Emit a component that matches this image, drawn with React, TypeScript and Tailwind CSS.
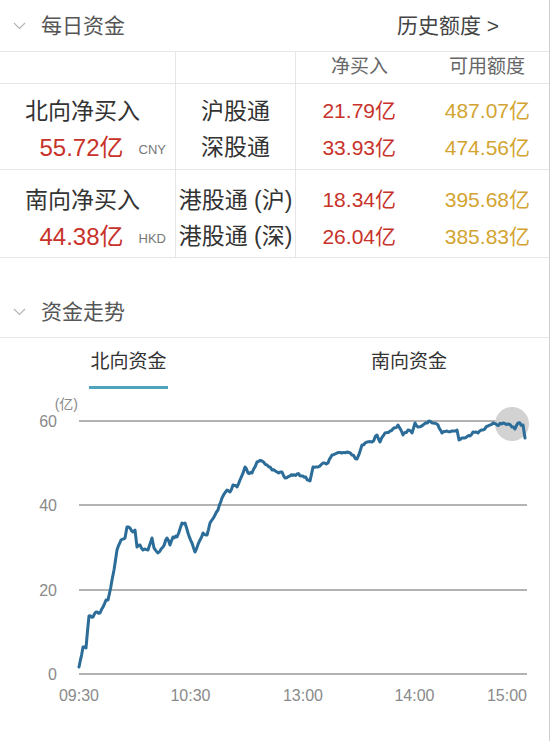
const pts: [number, number][] = [
  [79, 667], [83, 647], [86, 648], [89, 616], [93, 617], [96, 612], [100, 613], [103, 607], [106, 600], [108, 600],
  [112, 580], [114, 570], [117, 550], [121, 540], [125, 538], [127, 527], [130, 528], [133, 532], [135, 530], [137, 547],
  [140, 545], [143, 550], [148, 550], [152, 538], [154, 548], [158, 553], [163, 547], [167, 538], [170, 545], [173, 537],
  [177, 537], [182, 523], [185, 523], [188, 533], [192, 543], [195, 552], [200, 540], [203, 533], [207, 535], [210, 523],
  [215, 515], [218, 510], [222, 498], [227, 490], [230, 492], [233, 485], [237, 487], [240, 480], [245, 467], [248, 473],
  [252, 473], [257, 462], [262, 461], [267, 465], [272, 470], [277, 472], [282, 472], [285, 478], [290, 476], [297, 474],
  [303, 476], [310, 481], [313, 467], [318, 467], [323, 463], [328, 463], [332, 455], [337, 453], [342, 453], [347, 452],
  [352, 455], [357, 459], [362, 445], [367, 442], [372, 442], [377, 435], [380, 442], [385, 433], [390, 431], [397, 427],
  [398, 425], [403, 435], [408, 430], [412, 433], [415, 423], [418, 427], [423, 425], [429, 421], [433, 423], [438, 425],
  [442, 433], [447, 431], [452, 431], [457, 430], [459, 440], [463, 438], [470, 436], [473, 432], [478, 433], [483, 430],
  [488, 426], [493, 423], [497, 425], [503, 423], [508, 424], [512, 427], [515, 429], [518, 423], [523, 425], [525, 438],
];

// chart svg starts at page y = 390
const TOP = 390;

function buildPath() {
  let seed = 11;
  const rand = () => {
    seed = (seed * 9301 + 49297) % 233280;
    return seed / 233280;
  };
  let d = `M${pts[0][0]},${pts[0][1] - TOP}`;
  for (let i = 1; i < pts.length; i++) {
    const [x0, y0] = pts[i - 1];
    const [x1, y1] = pts[i];
    const steps = Math.max(1, Math.round((x1 - x0) / 1.5));
    for (let s = 1; s <= steps; s++) {
      const x = x0 + ((x1 - x0) * s) / steps;
      const noise = s < steps ? (rand() - 0.5) * 2.2 : 0;
      const y = y0 + ((y1 - y0) * s) / steps + noise;
      d += ` L${x.toFixed(1)},${(y - TOP).toFixed(1)}`;
    }
  }
  return d;
}

const linePath = buildPath();

function Chevron() {
  return (
    <svg width="13" height="8" viewBox="0 0 13 8" fill="none">
      <path d="M1 1l5.5 5.5L12 1" stroke="#b5b5b5" strokeWidth="1.2" />
    </svg>
  );
}

function SectionHeader({ title, right }: { title: string; right?: string }) {
  return (
    <div className="h-[52px] flex items-center border-b border-[#e6e6e6]">
      <div className="w-[41px] pl-[13px] flex items-center">
        <Chevron />
      </div>
      <span className="text-[21px] text-[#555]">{title}</span>
      {right && <span className="ml-auto mr-[50px] text-[21px] text-[#444]">{right}</span>}
    </div>
  );
}

type Group = {
  label: string;
  total: string;
  unit: string;
  rows: { name: string; net: string; quota: string }[];
  pt: string;
  h: string;
};

const groups: Group[] = [
  {
    label: "北向净买入",
    total: "55.72亿",
    unit: "CNY",
    pt: "pt-[9px]",
    h: "h-[86px]",
    rows: [
      { name: "沪股通", net: "21.79亿", quota: "487.07亿" },
      { name: "深股通", net: "33.93亿", quota: "474.56亿" },
    ],
  },
  {
    label: "南向净买入",
    total: "44.38亿",
    unit: "HKD",
    pt: "pt-[12px]",
    h: "h-[88px]",
    rows: [
      { name: "港股通 (沪)", net: "18.34亿", quota: "395.68亿" },
      { name: "港股通 (深)", net: "26.04亿", quota: "385.83亿" },
    ],
  },
];

function FlowTable() {
  return (
    <div>
      <div className="grid grid-cols-[176px_120px_104px_1fr] h-[32px] border-b border-[#e6e6e6]">
        <div className="border-r border-[#e6e6e6]" />
        <div className="border-r border-[#e6e6e6]" />
        <div className="flex items-center justify-end pr-[12px] text-[19px] text-[#666]">净买入</div>
        <div className="flex items-center justify-end pr-[24px] text-[19px] text-[#666]">可用额度</div>
      </div>
      {groups.map((g) => (
        <div key={g.label} className={`grid grid-cols-[176px_120px_104px_1fr] border-b border-[#e6e6e6] ${g.h}`}>
          <div className={`border-r border-[#e6e6e6] ${g.pt}`}>
            <div className="h-[36px] flex items-center pl-[25px] text-[23px] text-[#333]">{g.label}</div>
            <div className="h-[37px] flex items-center justify-end pr-[9px] gap-[15px]">
              <span className="text-[24px] text-[#c8322a]">{g.total}</span>
              <span className="text-[13px] text-[#777] pt-[4px]">{g.unit}</span>
            </div>
          </div>
          <div className={`border-r border-[#e6e6e6] ${g.pt}`}>
            {g.rows.map((r, i) => (
              <div key={r.name} className={`${i === 0 ? "h-[36px]" : "h-[37px]"} flex items-center justify-center text-[23px] text-[#333] whitespace-nowrap`}>
                {r.name}
              </div>
            ))}
          </div>
          <div className={g.pt}>
            {g.rows.map((r, i) => (
              <div key={r.net} className={`${i === 0 ? "h-[36px]" : "h-[37px]"} flex items-center justify-end pr-[4px] text-[21px] text-[#c8322a]`}>
                {r.net}
              </div>
            ))}
          </div>
          <div className={g.pt}>
            {g.rows.map((r, i) => (
              <div key={r.quota} className={`${i === 0 ? "h-[36px]" : "h-[37px]"} flex items-center justify-end pr-[19px] text-[21px] text-[#d3a431]`}>
                {r.quota}
              </div>
            ))}
          </div>
        </div>
      ))}
    </div>
  );
}

function TrendChart() {
  const grid = [
    { v: "60", y: 421 },
    { v: "40", y: 505 },
    { v: "20", y: 590 },
    { v: "0", y: 674 },
  ];
  const times = [
    { t: "09:30", x: 79, a: "middle" },
    { t: "10:30", x: 190.5, a: "middle" },
    { t: "13:00", x: 303, a: "middle" },
    { t: "14:00", x: 414.5, a: "middle" },
    { t: "15:00", x: 527, a: "end" },
  ];
  return (
    <svg width="549" height="351" viewBox="0 0 549 351" fontFamily="'Liberation Sans','Noto Sans CJK SC',sans-serif">
      <text x="78" y="19" textAnchor="end" fontSize="14" fill="#8a8a8a">(亿)</text>
      {grid.map((g) => (
        <g key={g.v}>
          <line x1="79" x2="527" y1={g.y - TOP} y2={g.y - TOP} stroke="#9a9a9a" strokeWidth="1.3" />
          <text x="57" y={g.y - TOP + 6} textAnchor="end" fontSize="16" fill="#8a8a8a">{g.v}</text>
        </g>
      ))}
      {times.map((t) => (
        <text key={t.t} x={t.x} y={311} textAnchor={t.a as "middle" | "end"} fontSize="16" fill="#8a8a8a">
          {t.t}
        </text>
      ))}
      <circle cx="512" cy={424 - TOP} r="17" fill="#d2d2d2" />
      <path d={linePath} fill="none" stroke="#2b6c98" strokeWidth="3" strokeLinejoin="round" strokeLinecap="round" />
    </svg>
  );
}

export default function App() {
  return (
    <div className="w-[550px] h-[741px] bg-white border-r border-[#cfcfcf] overflow-hidden font-['Liberation_Sans','Noto_Sans_CJK_SC',sans-serif]">
      <SectionHeader title="每日资金" right="历史额度 >" />
      <FlowTable />
      <div className="h-[28px]" />
      <SectionHeader title="资金走势" />
      <div className="h-[52px] flex items-start">
        <div className="ml-[89px] w-[79px] flex flex-col items-center">
          <span className="h-[48px] flex items-center text-[19px] text-[#333] whitespace-nowrap">北向资金</span>
          <span className="w-[79px] h-[3px] bg-[#4ea5bb]" />
        </div>
        <div className="ml-[203px] h-[48px] flex items-center text-[19px] text-[#333] whitespace-nowrap">南向资金</div>
      </div>
      <TrendChart />
    </div>
  );
}
